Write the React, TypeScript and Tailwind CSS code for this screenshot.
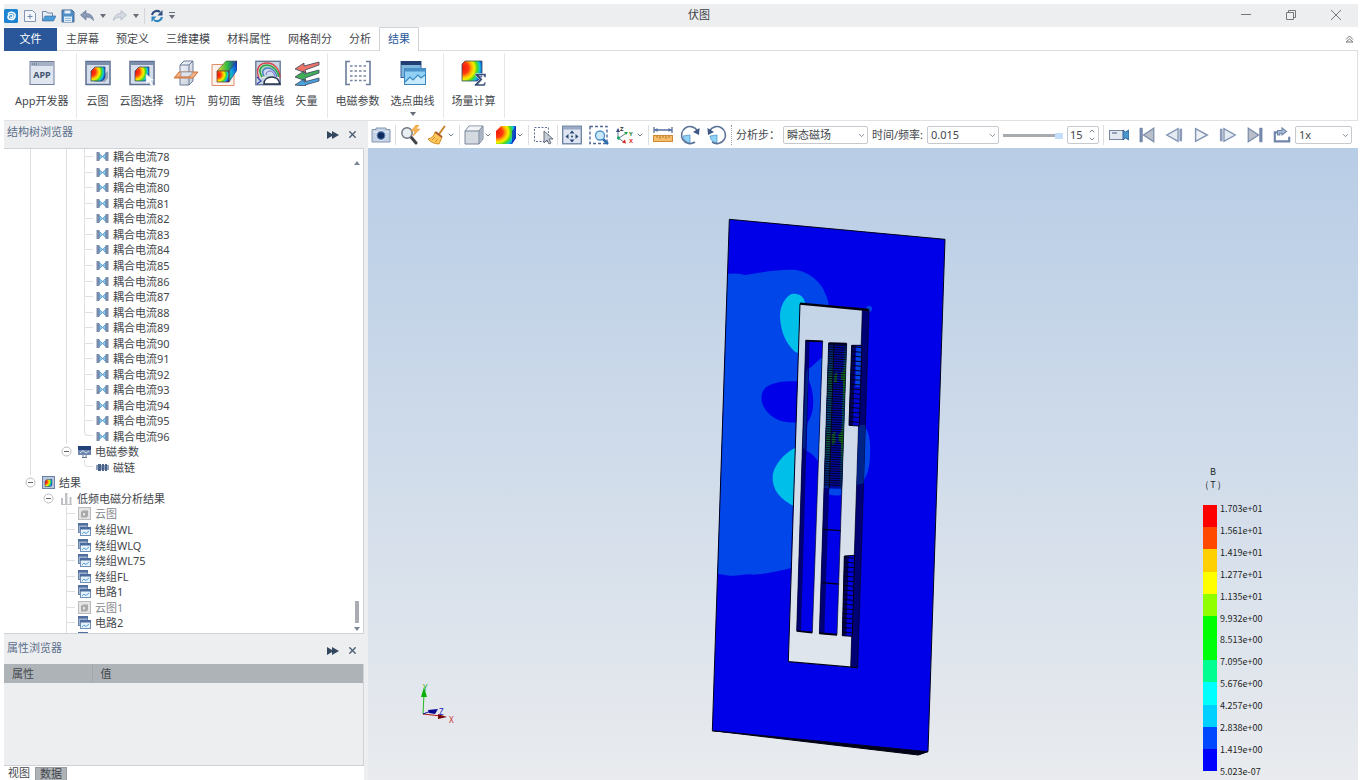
import { ChevronDown, ChevronUp, X } from "lucide-react";
import { type ReactNode, useState } from "react";

/* ------------------------------------------------------------------ */
/* Icons                                                               */
/* ------------------------------------------------------------------ */

type IconProps = { className?: string };

/** Gradients shared by all contour icons, mounted once at the page root. */
function SharedDefs() {
  return (
    <svg aria-hidden width="0" height="0" className="absolute">
      <defs>
        <radialGradient id="contour" cx="0.05" cy="0.35" r="1.1">
          <stop offset="0" stopColor="#f01808" />
          <stop offset="0.26" stopColor="#ff3a10" />
          <stop offset="0.4" stopColor="#ffb000" />
          <stop offset="0.52" stopColor="#f4f000" />
          <stop offset="0.64" stopColor="#4ed818" />
          <stop offset="0.76" stopColor="#10c8d8" />
          <stop offset="0.9" stopColor="#1038e0" />
          <stop offset="1" stopColor="#0818b0" />
        </radialGradient>
        <linearGradient id="contourSide" x1="0" y1="1" x2="1" y2="0">
          <stop offset="0" stopColor="#20c850" />
          <stop offset="0.4" stopColor="#10a8e0" />
          <stop offset="1" stopColor="#0c20c0" />
        </linearGradient>
        <linearGradient id="contourTop" x1="0" y1="0" x2="1" y2="0">
          <stop offset="0" stopColor="#ffd030" />
          <stop offset="0.5" stopColor="#30c040" />
          <stop offset="1" stopColor="#1030c8" />
        </linearGradient>
        <linearGradient id="paleFace" x1="0" y1="0" x2="1" y2="1">
          <stop offset="0" stopColor="#f4f6fa" />
          <stop offset="1" stopColor="#c3cbd8" />
        </linearGradient>
      </defs>
    </svg>
  );
}

function RibbonSvg({ children }: { children: ReactNode }) {
  return (
    <svg aria-hidden viewBox="0 0 26 26" className="size-[26px]" fill="none">
      {children}
    </svg>
  );
}

const AppIcon = () => (
  <RibbonSvg>
    <rect x="1" y="1.5" width="24" height="23" fill="#dfe6f0" stroke="#6f7f9c" />
    <rect x="1.5" y="2" width="23" height="4" fill="#a5b0c4" />
    <path d="M3 4h1M5 4h1M7 4h1" stroke="#4b5c7c" />
    <text x="13" y="18" textAnchor="middle" fontSize="9" fontWeight="700" fill="#44546f">
      APP
    </text>
  </RibbonSvg>
);

const ContourIcon = () => (
  <RibbonSvg>
    <rect x="1" y="1.5" width="24" height="23" fill="#d5deea" stroke="#5b6e90" strokeWidth="1.5" />
    <rect x="1.5" y="2" width="23" height="3" fill="#7e8fae" />
    <path d="M9 22h11l3-4V11l-3 2z" fill="#9ba7b8" />
    <path d="M6 11l4-4h10v9c0 3-2 5-5 5H6z" fill="url(#contour)" stroke="#28406a" strokeWidth="0.7" />
  </RibbonSvg>
);

const ContourPickIcon = () => (
  <RibbonSvg>
    <rect x="1" y="1.5" width="24" height="23" fill="#d5deea" stroke="#5b6e90" strokeWidth="1.5" />
    <rect x="1.5" y="2" width="23" height="3" fill="#7e8fae" />
    <path d="M6 11l4-4h10v9c0 3-2 5-5 5H6z" fill="url(#contour)" stroke="#28406a" strokeWidth="0.7" />
    <path d="M17 14l8 6-3 1 3 5-3 0-2-4-3 2z" fill="#fff" stroke="#b9c2d0" strokeWidth="0.5" />
  </RibbonSvg>
);

const SliceIcon = () => (
  <RibbonSvg>
    <path d="M7 5l4-4h9v20l-4 4H7z" fill="url(#paleFace)" stroke="#6d7d99" />
    <path d="M7 5h9v20M16 5l4-4" stroke="#6d7d99" />
    <path d="M6 12h19l-5 6H1z" fill="#f3b083" stroke="#c9733c" />
    <path d="M8 12h11v2l-4 3H8z" fill="#dfe4ec" stroke="#8a93a8" strokeWidth="0.7" />
    <path d="M3 17h15" stroke="#e07c38" />
  </RibbonSvg>
);

const CutPlaneIcon = () => (
  <RibbonSvg>
    <path d="M1 4.5h22v21H1z" fill="#fdf1ec" stroke="#e28d6c" />
    <path d="M6 11l9-10h11l-8 10z" fill="url(#contourTop)" stroke="#5b5b4c" strokeWidth="0.6" />
    <path d="M18 11l8-10v9l-8 12z" fill="url(#contourSide)" stroke="#1b2f70" strokeWidth="0.6" />
    <path d="M6 11h12v11H6z" fill="url(#contour)" stroke="#7d3d28" strokeWidth="0.8" />
  </RibbonSvg>
);

const IsolineIcon = () => (
  <RibbonSvg>
    <rect x="0.8" y="1.3" width="24.4" height="23.4" fill="#c9d3e1" stroke="#6a7b98" strokeWidth="1.4" />
    <path d="M4 18C0 8 5 3 12 3s13 6 13 15" stroke="#d8454b" strokeWidth="1.4" fill="#e9e2e8" />
    <path d="M7 17C2 9 7 5 12 5s11 5 12 12" stroke="#2ea44a" strokeWidth="1.6" fill="#a8d9b4" />
    <path d="M9 16C6 11 9 8 13 8s8 4 9 9" stroke="#4c79c8" strokeWidth="1.4" fill="#cddcf2" />
    <path d="M11 15c0-3 2-4 4-4s4 2 5 5" stroke="#7a68c0" />
    <path d="M9 24c0-5 4-7 8-7s7 3 8 7z" fill="#fff" stroke="#26334d" strokeWidth="1.4" />
    <path d="M2 17l4 4-4 3" stroke="#3346b0" strokeWidth="1.2" />
  </RibbonSvg>
);

const VectorIcon = () => (
  <RibbonSvg>
    <g stroke="#36435c" strokeWidth="0.8">
      <path d="M1 9l9-6v3l15-4v3l-14 5 1 3z" fill="#ee7468" />
      <path d="M1 17l9-6v3l15-4v3l-14 5 1 3z" fill="#3fae57" />
      <path d="M1 25l9-6v3l15-4v3l-14 4 1 1z" fill="#4aa3dd" />
    </g>
  </RibbonSvg>
);

const EmParamIcon = () => (
  <RibbonSvg>
    <path d="M5 1.5H1v23h4M21 1.5h4v23h-4" stroke="#6b7c99" strokeWidth="1.6" />
    <path d="M5 6h16M5 11h16M5 16h16M5 20.5h16" stroke="#76859f" strokeWidth="1.4" strokeDasharray="2.6 1.9" />
  </RibbonSvg>
);

const CurveIcon = () => (
  <RibbonSvg>
    <rect x="1" y="1.5" width="20" height="16" fill="#7fb6dc" stroke="#35619a" />
    <rect x="1" y="1" width="20" height="4" fill="#213d72" />
    <rect x="4.5" y="8.5" width="21" height="16" fill="#8fd0f4" stroke="#3c86bf" />
    <rect x="4.5" y="8" width="21" height="3.5" fill="#4a90c8" />
    <path d="M5 22l5-5 3 3 5-5 3 3 4-3v9H5z" fill="#c7eafc" />
    <path d="M5 22l5-5 3 3 5-5 3 3 4-3" stroke="#3a8ac6" strokeWidth="1.2" />
  </RibbonSvg>
);

const FieldCalcIcon = () => (
  <RibbonSvg>
    <path d="M1 4l3-3h17v15l-4 5H1z" fill="url(#contour)" stroke="#3c4b60" strokeWidth="0.8" />
    <path d="M14 13.500h11v4h-1.500l-1-2h-4l3 4-4 4.500h5l1-2H25l-1 4H13.500v-1.500l5-5-4.500-4.500z" fill="#3b5078" stroke="#fff" strokeWidth="0.500" />
  </RibbonSvg>
);

function ToolSvg({ children, className = "size-5" }: IconProps & { children: ReactNode }) {
  return (
    <svg aria-hidden viewBox="0 0 20 20" className={className} fill="none">
      {children}
    </svg>
  );
}

const CameraIcon = () => (
  <ToolSvg>
    <path d="M1 4.500h4V3h10v1.500h4V17H1z" fill="#c5d2e3" stroke="#8496b3" />
    <path d="M2 7h16" stroke="#e6ecf4" />
    <circle cx="10" cy="10.500" r="5" fill="#5c7fb4" stroke="#e6edf6" />
    <circle cx="10" cy="10.500" r="3.200" fill="#0f2a5c" />
  </ToolSvg>
);

const FlashZoomIcon = () => (
  <ToolSvg>
    <path d="M11 12l5 6" stroke="#40434a" strokeWidth="3" strokeLinecap="round" />
    <circle cx="7" cy="8" r="5.200" fill="#e9eef2" stroke="#6c737c" strokeWidth="1.400" />
    <path d="M16 0l-5 6h4l-2 5 7-7h-4l3-4z" fill="#f7b552" stroke="#e08c28" strokeWidth="0.500" />
  </ToolSvg>
);

const BroomIcon = () => (
  <ToolSvg>
    <path d="M17.500 1.500l-5 7" stroke="#c8862f" strokeWidth="2" strokeLinecap="round" />
    <path d="M8 7l7 5-3 7c-4 0-9-2-11-5 4-1 6-3 7-7z" fill="#fbc65a" stroke="#d38e2a" />
    <path d="M8.500 7l6.500 5" stroke="#a9562a" strokeWidth="1.800" />
    <path d="M5 15l3-3M8.500 17l2-3" stroke="#d38e2a" />
  </ToolSvg>
);

const CubeIcon = () => (
  <ToolSvg>
    <path d="M1 6l4-5h14v13l-4 5H1z" fill="#d5dae1" stroke="#78869b" />
    <path d="M15.500 6.500L18.500 2.500v11l-3 4z" fill="#a9b3c2" />
    <path d="M2 5.500l3.500-4h12l-3 4z" fill="#f2f4f7" />
    <path d="M1 6h14v13M15 6l4-5" stroke="#78869b" />
  </ToolSvg>
);

const ContourCubeIcon = () => (
  <ToolSvg>
    <path d="M0 6l5-5h15v12l-4 6H0z" fill="url(#contour)" />
    <path d="M16 6l4-5v12l-4 6z" fill="#0a22b8" opacity="0.700" />
  </ToolSvg>
);

const PickBoxIcon = () => (
  <ToolSvg>
    <rect x="1.500" y="2.500" width="14" height="14" stroke="#5f7394" strokeDasharray="2 1.500" />
    <path d="M11 6v12l3-3 2 4 2-1-2-4h4z" fill="#c6cdd8" stroke="#5c6577" strokeWidth="0.900" />
  </ToolSvg>
);

const FitIcon = () => (
  <ToolSvg>
    <rect x="0.700" y="1.200" width="18.600" height="17.600" fill="#dde5f0" stroke="#6a7ea0" strokeWidth="1.300" />
    <rect x="1" y="1.500" width="18" height="3" fill="#9aaac4" />
    <path d="M10 5.500l2.500 3h-5zM10 17.500l2.500-3h-5zM3.500 11.500l3-2.500v5zM16.500 11.500l-3-2.500v5z" fill="#2c4674" />
    <circle cx="10" cy="11.500" r="1" fill="#2c4674" />
  </ToolSvg>
);

const ZoomAreaIcon = () => (
  <ToolSvg>
    <rect x="1" y="1.500" width="17" height="17" stroke="#4f6a94" strokeWidth="1.400" strokeDasharray="3 2" />
    <path d="M14 14l5 5" stroke="#2b6cb0" strokeWidth="2.500" />
    <circle cx="11" cy="10.500" r="4.500" fill="#c9e9fa" stroke="#4b8fc8" strokeWidth="1.300" />
  </ToolSvg>
);

const AxesIcon = () => (
  <ToolSvg>
    <path d="M2 4v9l6 4M3 13l6-4" stroke="#6b7c88" />
    <path d="M2 3l2 4H0z" fill="#3a4f80" />
    <path d="M12 7H8l2 3z" fill="#28a048" />
    <path d="M10 18.500l-4-1 3-3z" fill="#d22" />
    <circle cx="2.500" cy="13" r="1.700" fill="#20a870" />
    <text x="4" y="6" fontSize="6" fontWeight="700" fill="#333">
      Z
    </text>
    <text x="13" y="11" fontSize="6" fontWeight="700" fill="#2d8a3c">
      Y
    </text>
    <text x="13" y="18" fontSize="6" fontWeight="700" fill="#d33">
      X
    </text>
  </ToolSvg>
);

const RulerIcon = () => (
  <ToolSvg>
    <path d="M1 5h18M1 2v6M19 2v6" stroke="#54709e" strokeWidth="1.300" />
    <path d="M1.500 5l3-2v4zM18.500 5l-3-2v4z" fill="#54709e" />
    <rect x="0.500" y="10.500" width="19" height="6" fill="#f6bd6a" stroke="#cf8a36" />
    <path d="M4 11v2M7 11v3M10 11v2M13 11v3M16 11v2" stroke="#a8671c" strokeWidth="0.800" />
  </ToolSvg>
);

const RotateLeftIcon = () => (
  <ToolSvg>
    <path d="M10 10v8a8 8 0 0 1-7-7z" fill="#8fd2f6" stroke="#3f8dc6" strokeWidth="0.700" />
    <path d="M15 17a8.500 8.500 0 1 1 2.500-11" stroke="#5d7499" strokeWidth="1.600" />
    <path d="M19.500 3l-.5 7-6-3z" fill="#3d5884" />
  </ToolSvg>
);

const RotateRightIcon = () => (
  <ToolSvg>
    <path d="M10 10v8a8 8 0 0 1-7-7z" fill="#8fd2f6" stroke="#3f8dc6" strokeWidth="0.700" />
    <path d="M5 17a8.500 8.500 0 1 0-2.500-11" stroke="#5d7499" strokeWidth="1.600" />
    <path d="M.5 3l.5 7 6-3z" fill="#3d5884" />
  </ToolSvg>
);

const RecordIcon = () => (
  <ToolSvg>
    <rect x="0.500" y="5.500" width="14" height="9" fill="#e3e8ef" stroke="#75859f" />
    <path d="M3 8h5" stroke="#75859f" strokeWidth="1.400" />
    <path d="M14 5l2.500 2L20 5v10l-3.500-2-2.500 2z" fill="#4d97cf" stroke="#35608f" />
  </ToolSvg>
);

const FirstFrameIcon = () => (
  <ToolSvg className="size-[18px]">
    <path d="M3.500 2v16" stroke="#7388aa" strokeWidth="3.500" />
    <path d="M17.500 2.500v15L6 10z" fill="#b9bec8" stroke="#7c8fae" strokeWidth="1.400" />
  </ToolSvg>
);

const PrevFrameIcon = () => (
  <ToolSvg className="size-[18px]">
    <path d="M17.500 3v14" stroke="#8a9cba" strokeWidth="3" />
    <path d="M14.500 3v14L2 10z" fill="#e4eaf2" stroke="#8194b3" strokeWidth="1.500" />
  </ToolSvg>
);

const PlayIcon = () => (
  <ToolSvg className="size-[18px]">
    <path d="M4 3v14l13-7z" fill="#eef2f7" stroke="#8194b3" strokeWidth="1.600" />
  </ToolSvg>
);

const NextFrameIcon = () => (
  <ToolSvg className="size-[18px]">
    <path d="M2.500 3v14" stroke="#8a9cba" strokeWidth="3" />
    <path d="M5.500 3v14L18 10z" fill="#e4eaf2" stroke="#8194b3" strokeWidth="1.500" />
  </ToolSvg>
);

const LastFrameIcon = () => (
  <ToolSvg className="size-[18px]">
    <path d="M16.500 2v16" stroke="#7388aa" strokeWidth="3.500" />
    <path d="M2.500 2.500v15L14 10z" fill="#b9bec8" stroke="#7c8fae" strokeWidth="1.400" />
  </ToolSvg>
);

const LoopIcon = () => (
  <ToolSvg className="size-[18px]">
    <path d="M5 7H2v10h16v-5" stroke="#6f86aa" strokeWidth="2.400" />
    <path d="M5 10V5h5V2l5 4-5 4V8H7.500v2z" fill="#a9bbd6" stroke="#6f86aa" strokeWidth="1.200" />
  </ToolSvg>
);

/* ------------------------------------------------------------------ */
/* Title bar                                                           */
/* ------------------------------------------------------------------ */

const Caret = () => (
  <svg aria-hidden viewBox="0 0 6 4" className="h-1 w-1.5" fill="#666d78">
    <path d="M0 0h6L3 4z" />
  </svg>
);

function QuickSvg({ children }: { children: ReactNode }) {
  return (
    <svg aria-hidden viewBox="0 0 14 14" className="size-3.5" fill="none">
      {children}
    </svg>
  );
}

function TitleBar() {
  return (
    <header className="grid h-[23px] shrink-0 grid-cols-[1fr_auto_1fr] items-center bg-[#edeef0]">
      <div className="flex items-center gap-[5px]">
        <QuickSvg>
          <rect x="0" y="0" width="14" height="14" rx="1.500" fill="#1c84d0" />
          <path d="M4 5C6 2 12 3 11 7.500 10 12 4 11 4 8s5-3.500 5-1-3 1.500-2.500.5" stroke="#fff" strokeWidth="1.500" />
        </QuickSvg>
        <button type="button" aria-label="新建">
          <QuickSvg>
            <path d="M1.500 1.500h8l3 3v8h-11z" fill="#f3f6fa" stroke="#8395b2" />
            <path d="M7 5v5M4.500 7.500h5" stroke="#6f86ab" />
          </QuickSvg>
        </button>
        <button type="button" aria-label="打开">
          <QuickSvg>
            <path d="M.5 12V2.500h4l1 1.500h5v3" fill="#e8eef5" stroke="#6d87ac" />
            <path d="M.5 12L3 7h11l-2.500 5z" fill="#4a9cd8" stroke="#39699c" strokeWidth="0.600" />
          </QuickSvg>
        </button>
        <button type="button" aria-label="保存">
          <QuickSvg>
            <path d="M1 1h10l2 2v10H1z" fill="#4f8fc6" stroke="#4a6894" />
            <path d="M3.500 1.500h6v3h-6z" fill="#e8eff6" />
            <path d="M3 7.500h8V13H3z" fill="#dcebf6" />
            <path d="M4 9.500h6M4 11.500h6" stroke="#7aa7cc" strokeWidth="0.700" />
          </QuickSvg>
        </button>
        <button type="button" aria-label="撤销" className="flex items-center gap-1.5">
          <QuickSvg>
            <path d="M.5 6L6 1.500v3c5 0 7 3 7.500 7C12 9 9 8 6 8v3z" fill="#8a9ab6" stroke="#66789a" strokeWidth="0.700" />
          </QuickSvg>
          <Caret />
        </button>
        <button type="button" aria-label="重做" className="ml-0.5 flex items-center gap-1.5">
          <QuickSvg>
            <path d="M13.500 6L8 1.500v3c-5 0-7 3-7.500 7C2 9 5 8 8 8v3z" fill="#d5dae2" stroke="#aab2c0" strokeWidth="0.700" />
          </QuickSvg>
          <Caret />
        </button>
        <span className="h-4 w-px bg-[#d4d6d9]" />
        <button type="button" aria-label="刷新">
          <QuickSvg>
            <path d="M2 6a5 5 0 0 1 8-3" stroke="#2c4e80" strokeWidth="2.200" />
            <path d="M12.500 1v5.500H7.500z" fill="#2c4e80" />
            <path d="M12 8a5 5 0 0 1-8 3" stroke="#2f86bf" strokeWidth="2.200" />
            <path d="M1.500 13V7.500h5z" fill="#2f86bf" />
          </QuickSvg>
        </button>
        <svg aria-hidden viewBox="0 0 6 7" className="h-[7px] w-1.5" fill="#666d78">
          <path d="M0 0h6v1H0zM0 3h6L3 7z" />
        </svg>
      </div>
      <h1 className="pl-9 text-[#3a3d42]">伏图</h1>
      <div className="flex items-center justify-end gap-[33px] pr-4 text-[#777]">
        <button type="button" aria-label="最小化">
          <svg aria-hidden viewBox="0 0 12 12" className="size-3" stroke="currentColor">
            <path d="M1 4.500h10" />
          </svg>
        </button>
        <button type="button" aria-label="还原">
          <svg aria-hidden viewBox="0 0 12 12" className="size-3" stroke="currentColor" fill="none">
            <path d="M1.500 2.500h7v7h-7zM3.500 2.500v-2h7v7h-2" />
          </svg>
        </button>
        <button type="button" aria-label="关闭">
          <svg aria-hidden viewBox="0 0 12 12" className="size-3" stroke="currentColor">
            <path d="M1 0l10 10M11 0L1 10" />
          </svg>
        </button>
      </div>
    </header>
  );
}

/* ------------------------------------------------------------------ */
/* Ribbon                                                              */
/* ------------------------------------------------------------------ */

const MENU_TABS = ["主屏幕", "预定义", "三维建模", "材料属性", "网格剖分", "分析", "结果"];

function MenuTabs() {
  const [active, setActive] = useState("结果");
  return (
    <nav className="flex h-6 shrink-0 border-b border-[#dcdddf] pt-px">
      <button type="button" className="h-[23px] w-[53px] bg-[#2a579a] text-white">
        文件
      </button>
      <div className="flex gap-px pl-px">
        {MENU_TABS.map((tab) => (
          <button
            key={tab}
            type="button"
            aria-pressed={tab === active}
            onClick={() => setActive(tab)}
            className={
              tab === active
                ? "-mt-px -ml-px h-6 border-x border-t border-[#d0d2d5] bg-white px-2 text-[#2a579a]"
                : "px-2"
            }
          >
            {tab}
          </button>
        ))}
      </div>
      <button type="button" aria-label="折叠功能区" className="mr-1 ml-auto text-[#777]">
        <svg aria-hidden viewBox="0 0 9 8" className="h-2 w-[9px]" fill="none" stroke="currentColor">
          <path d="M1 4.500L4.500 1 8 4.500M1 7l3.500-3L8 7z" />
        </svg>
      </button>
    </nav>
  );
}

type RibbonItem = { label: string; icon: ReactNode; menu?: boolean };

const RIBBON_GROUPS: { className: string; items: RibbonItem[] }[] = [
  { className: "pl-[11px] pr-[7px]", items: [{ label: "App开发器", icon: <AppIcon /> }] },
  {
    className: "pl-[10px] pr-[9px]",
    items: [
      { label: "云图", icon: <ContourIcon /> },
      { label: "云图选择", icon: <ContourPickIcon /> },
      { label: "切片", icon: <SliceIcon /> },
      { label: "剪切面", icon: <CutPlaneIcon /> },
      { label: "等值线", icon: <IsolineIcon /> },
      { label: "矢量", icon: <VectorIcon /> },
    ],
  },
  {
    className: "px-2",
    items: [
      { label: "电磁参数", icon: <EmParamIcon /> },
      { label: "选点曲线", icon: <CurveIcon />, menu: true },
    ],
  },
  { className: "px-2", items: [{ label: "场量计算", icon: <FieldCalcIcon /> }] },
];

function Ribbon() {
  return (
    <div className="flex h-[70px] shrink-0 border-r border-b border-[#e0e1e3] pt-0.5 pb-0.5">
      {RIBBON_GROUPS.map((group) => (
        <div
          key={group.items[0]!.label}
          className={"flex gap-[11px] border-r border-[#e6e7e9] " + group.className}
        >
          {group.items.map((item) => (
            <button
              key={item.label}
              type="button"
              className="flex flex-col items-center pt-[7px]"
            >
              {/* icons may be wider than a two-character label */}
              <span className="-mx-1 flex h-[30px] justify-center">{item.icon}</span>
              <span className="leading-[22px] whitespace-nowrap">{item.label}</span>
              {item.menu && <Caret />}
            </button>
          ))}
        </div>
      ))}
    </div>
  );
}

/* ------------------------------------------------------------------ */
/* Side panels                                                         */
/* ------------------------------------------------------------------ */

function PanelHeader({ title }: { title: string }) {
  return (
    <div className="flex h-[27px] shrink-0 items-center pr-2.5 pl-[3px] text-[#5c6f8c]">
      <h2 className="pb-1">{title}</h2>
      <button type="button" aria-label={title + " 停靠"} className="mr-2 ml-auto">
        <svg aria-hidden viewBox="0 0 12 8" className="h-2 w-3" fill="#33475f">
          <path d="M0 0l5 3V0l7 4-7 4V5L0 8z" />
        </svg>
      </button>
      <button type="button" aria-label={title + " 关闭"}>
        <X className="size-[11px] text-[#4a5c73]" strokeWidth={3} />
      </button>
    </div>
  );
}

type TreeIconKind = "coil" | "monitor" | "chain" | "result" | "bars" | "contour" | "curve";

function TreeIcon({ kind }: { kind: TreeIconKind }) {
  return (
    <svg aria-hidden viewBox="0 0 13 13" className="size-[13px] shrink-0" fill="none">
      {kind === "coil" && (
        <>
          <path d="M.5 2h3v9h-3z" fill="#7c8ca8" />
          <path d="M9.500 2h3v9h-3z" fill="#7c8ca8" />
          <path d="M3.500 3.500l3 3-3 3zM9.500 3.500l-3 3 3 3z" fill="#8cc6ec" stroke="#4a8cc0" strokeWidth="0.700" />
        </>
      )}
      {kind === "monitor" && (
        <>
          <path d="M0 1h13v9H0z" fill="#6f86ae" />
          <path d="M0 1h13v4H0z" fill="#24427a" />
          <path d="M2 8l3-2.500L8 8l3-2" stroke="#dbe5f2" />
          <path d="M4 12.500h5M5 10v2M8 10v2" stroke="#66789a" />
        </>
      )}
      {kind === "chain" && (
        <>
          <path d="M0 4h13v5H0z" fill="#8fa0ba" />
          <path d="M2 3h3v7H2zM6 3h2v7H6zM9 3h2v7H9z" fill="#4b628a" />
        </>
      )}
      {kind === "result" && (
        <>
          <rect x="0.500" y="0.500" width="12" height="12" fill="#b9c8dd" stroke="#6c81a6" />
          <path d="M3 5l2-1.500h5V9l-1.500 1.500H3z" fill="url(#contour)" stroke="#28406a" strokeWidth="0.500" />
        </>
      )}
      {kind === "bars" && <path d="M1 6h2v6H1zM5 1h2.500v11H5zM9.500 5h2v7h-2zM1 12h11v1H1z" fill="#bfc3c8" />}
      {kind === "contour" && (
        <>
          <rect x="0.500" y="0.500" width="12" height="12" fill="#e4e4e4" stroke="#bcbcbc" />
          <path d="M3 5l2-1.500h5V9l-1.500 1.500H3z" fill="#a9a9a9" />
          <path d="M5 6h2v2.500H5z" fill="#e6e6e6" />
        </>
      )}
      {kind === "curve" && (
        <>
          <rect x="0.500" y="0.500" width="9" height="9" fill="#9db3d2" stroke="#6d84aa" />
          <path d="M0 0h10v2.500H0z" fill="#526e9e" />
          <rect x="2.500" y="4.500" width="10" height="8" fill="#e6f1fa" stroke="#6d8fb8" />
          <path d="M2 4h11v2.500H2z" fill="#4d6c9e" />
          <path d="M4 11l2-2 2 1.500L11 8" stroke="#58a0d8" />
        </>
      )}
    </svg>
  );
}

/**
 * `guides` holds one character per indent column:
 *   "|" a passing line, "+" a tee, "L" the last child, "-" an expander.
 */
type TreeRow = { guides: string; icon: TreeIconKind; label?: string; muted?: boolean };

const COUPLED_CURRENTS: TreeRow[] = Array.from({ length: 19 }, (_, i) => ({
  guides: i === 18 ? "| |L" : "| |+",
  icon: "coil",
  label: "耦合电流" + (78 + i),
}));

const TREE_ROWS: TreeRow[] = [
  ...COUPLED_CURRENTS,
  { guides: "| -", icon: "monitor", label: "电磁参数" },
  { guides: "|  L", icon: "chain", label: "磁链" },
  { guides: "-", icon: "result", label: "结果" },
  { guides: " -", icon: "bars", label: "低频电磁分析结果" },
  { guides: "  +", icon: "contour", label: "云图", muted: true },
  { guides: "  +", icon: "curve", label: "绕组WL" },
  { guides: "  +", icon: "curve", label: "绕组WLQ" },
  { guides: "  +", icon: "curve", label: "绕组WL75" },
  { guides: "  +", icon: "curve", label: "绕组FL" },
  { guides: "  +", icon: "curve", label: "电路1" },
  { guides: "  +", icon: "contour", label: "云图1", muted: true },
  { guides: "  +", icon: "curve", label: "电路2" },
  { guides: "  +", icon: "curve" },
];

function Guide({ kind }: { kind: string }) {
  if (kind === "-") {
    return (
      <button type="button" aria-label="折叠" className="flex w-[18px] items-center justify-center">
        <svg aria-hidden viewBox="0 0 11 11" className="size-[11px]" fill="#fff" stroke="#b9bcc0">
          <circle cx="5.500" cy="5.500" r="4.500" />
          <path d="M3 5.500h5" stroke="#666" />
        </svg>
      </button>
    );
  }
  return (
    <span className="flex w-[18px] pl-[9px]">
      {kind === "|" && <span className="border-l border-[#dddfe1]" />}
      {kind === "+" && (
        <span className="flex items-center border-l border-[#dddfe1]">
          <span className="h-px w-2 bg-[#dddfe1]" />
        </span>
      )}
      {kind === "L" && <span className="h-1/2 w-[9px] rounded-bl-sm border-b border-l border-[#dddfe1]" />}
    </span>
  );
}

function StructureTree() {
  return (
    <section className="flex min-h-0 flex-1 flex-col">
      <PanelHeader title="结构树浏览器" />
      <div className="mr-1 flex min-h-0 flex-1 overflow-hidden border-t border-r border-b border-[#cfd2d6] bg-white">
        <ul className="flex h-[497px] flex-1 flex-col pl-[17px]">
          {TREE_ROWS.map((row, i) => (
            <li key={i} className="flex min-h-0 flex-1 leading-[15px]">
              {[...row.guides].map((kind, col) => (
                <Guide key={col} kind={kind} />
              ))}
              <span
                className={
                  "flex items-center gap-1 pl-[3px] " + (row.muted ? "text-[#85888c]" : "")
                }
              >
                <TreeIcon kind={row.icon} />
                {row.label}
              </span>
            </li>
          ))}
        </ul>
        <div className="flex w-3 flex-col items-center pt-3 pb-0.5">
          <svg aria-hidden viewBox="0 0 6 4" className="h-1 w-1.5" fill="#7b8794">
            <path d="M0 4h6L3 0z" />
          </svg>
          <span className="mt-auto mb-1 h-[22px] w-1 bg-[#a9adb1]" />
          <svg aria-hidden viewBox="0 0 6 4" className="h-1 w-1.5" fill="#7b8794">
            <path d="M0 0h6L3 4z" />
          </svg>
        </div>
      </div>
    </section>
  );
}

function PropertyPanel() {
  return (
    <section className="flex h-[146px] shrink-0 flex-col overflow-hidden pt-[3px]">
      <PanelHeader title="属性浏览器" />
      <div className="mr-1 h-[102px] shrink-0 border-r border-b border-[#cfd2d6]">
        <table className="w-full table-fixed border-collapse text-left">
          <thead>
            <tr className="h-[19px] bg-[#aeb3b7] leading-[15px]">
              <th scope="col" className="w-[88px] border-r border-[#a3a8ac] pl-2 font-normal">
                属性
              </th>
              <th scope="col" className="pl-2 font-normal">
                值
              </th>
            </tr>
          </thead>
        </table>
      </div>
      <div className="mr-1 flex min-h-0 flex-1 items-start bg-white leading-3">
        <button type="button" className="px-1 pt-px pb-1">
          视图
        </button>
        <button type="button" className="mt-px ml-px border border-b-0 border-[#989da1] bg-[#aeb3b7] px-1">
          数据
        </button>
      </div>
    </section>
  );
}

/* ------------------------------------------------------------------ */
/* View toolbar                                                        */
/* ------------------------------------------------------------------ */

function Tool({ label, children, menu }: { label: string; children: ReactNode; menu?: boolean }) {
  return (
    <button type="button" aria-label={label} className="flex shrink-0 items-center">
      {children}
      {menu && <ChevronDown className="size-2 text-[#6e7c8c]" strokeWidth={3} />}
    </button>
  );
}

const Divider = () => <span className="h-5 w-px shrink-0 bg-[#dcdee0]" />;

function ToolSelect({
  id,
  value,
  className,
}: {
  id: string;
  value: string;
  className: string;
}) {
  return (
    <span className={"relative flex shrink-0 items-center " + className}>
      <select
        id={id}
        aria-label={id}
        defaultValue={value}
        className="h-[18px] w-full appearance-none rounded-xs border border-[#c6c9cd] bg-white pl-[3px] leading-4"
      >
        <option>{value}</option>
      </select>
      <ChevronDown className="pointer-events-none absolute right-0.5 size-[9px] text-[#7b8794]" strokeWidth={2.5} />
    </span>
  );
}

function ViewToolbar() {
  const [frame, setFrame] = useState(15);
  return (
    <div className="flex h-[26px] shrink-0 items-center gap-1 bg-white pr-1.5 pl-[3px]">
      <Tool label="截图"><CameraIcon /></Tool>
      <Divider />
      <Tool label="快速缩放"><FlashZoomIcon /></Tool>
      <div className="flex items-center gap-1 pl-[3px]">
        <Tool label="清除" menu><BroomIcon /></Tool>
        <Divider />
        <Tool label="显示模式" menu><CubeIcon /></Tool>
        <Tool label="云图显示" menu><ContourCubeIcon /></Tool>
        <Divider />
        <Tool label="框选"><PickBoxIcon /></Tool>
        <Divider />
      </div>
      <div className="flex items-center gap-[7px]">
        <Tool label="适应窗口"><FitIcon /></Tool>
        <Tool label="窗口缩放"><ZoomAreaIcon /></Tool>
        <Tool label="视角" menu><AxesIcon /></Tool>
      </div>
      <Divider />
      <div className="flex items-center gap-[7px]">
        <Tool label="测量"><RulerIcon /></Tool>
        <Tool label="左旋"><RotateLeftIcon /></Tool>
        <Tool label="右旋"><RotateRightIcon /></Tool>
      </div>
      <span className="h-5 shrink-0 border-l border-dotted border-[#999]" />
      <label htmlFor="step" className="w-[43px] shrink-0 whitespace-nowrap">
        分析步：
      </label>
      <ToolSelect id="step" value="瞬态磁场" className="w-[85px]" />
      <label htmlFor="time" className="w-[51px] shrink-0 whitespace-nowrap">
        时间/频率:
      </label>
      <ToolSelect id="time" value="0.015" className="w-[72px]" />
      <input
        type="range"
        aria-label="帧"
        min={0}
        max={15}
        value={frame}
        onChange={(e) => setFrame(Number(e.target.value))}
        className="h-3 w-[60px] shrink-0 appearance-none bg-transparent [&::-webkit-slider-runnable-track]:h-[3px] [&::-webkit-slider-runnable-track]:bg-[#a5abaf] [&::-webkit-slider-thumb]:-mt-px [&::-webkit-slider-thumb]:h-1.5 [&::-webkit-slider-thumb]:w-2 [&::-webkit-slider-thumb]:appearance-none [&::-webkit-slider-thumb]:bg-[#c5dffb]"
      />
      <span className="flex h-[18px] w-8 shrink-0 items-center rounded-xs border border-[#c6c9cd] pl-0.5">
        <input
          aria-label="帧号"
          value={frame}
          onChange={(e) => setFrame(Number(e.target.value) || 0)}
          className="w-[18px]"
        />
        <span className="flex flex-col text-[#7b8794]">
          <button type="button" aria-label="增加" onClick={() => setFrame((f) => Math.min(15, f + 1))}>
            <ChevronUp className="size-2" strokeWidth={3} />
          </button>
          <button type="button" aria-label="减少" onClick={() => setFrame((f) => Math.max(0, f - 1))}>
            <ChevronDown className="size-2" strokeWidth={3} />
          </button>
        </span>
      </span>
      <Divider />
      <div className="ml-auto flex shrink-0 items-center gap-[9px]">
        <Tool label="录制"><RecordIcon /></Tool>
        <Tool label="首帧"><FirstFrameIcon /></Tool>
        <Tool label="上一帧"><PrevFrameIcon /></Tool>
        <Tool label="播放"><PlayIcon /></Tool>
        <Tool label="下一帧"><NextFrameIcon /></Tool>
        <Tool label="末帧"><LastFrameIcon /></Tool>
        <Tool label="循环"><LoopIcon /></Tool>
      </div>
      <ToolSelect id="speed" value="1x" className="w-[57px]" />
    </div>
  );
}

/* ------------------------------------------------------------------ */
/* 3D viewport                                                         */
/* ------------------------------------------------------------------ */

/** Slanted turn lines of a winding, from `top` to `bottom`. */
function Turns({
  top,
  bottom,
  step,
  left,
  right,
  slant,
  stroke,
  width,
}: {
  top: number;
  bottom: number;
  step: number;
  left: number;
  right: number;
  slant: number;
  stroke: string;
  width: number;
}) {
  const count = Math.floor((bottom - top) / step);
  return (
    <g stroke={stroke} strokeWidth={width}>
      {Array.from({ length: count }, (_, i) => {
        const y = top + step * i;
        const dx = (slant * i) / count;
        return <path key={i} d={`M${left - dx} ${y}L${right - dx} ${y + 3}`} />;
      })}
    </g>
  );
}

function FieldModel() {
  return (
    <svg
      role="img"
      aria-label="磁感应强度云图"
      viewBox="0 0 780 1710"
      className="absolute top-[52px] left-[332px] h-[570px] w-[260px]"
      fill="none"
    >
      <defs>
        <clipPath id="plate">
          <path clipRule="evenodd" d="M88 58L735 118 684 1655 37 1592zM300 311L488 328 452 1402 265 1385z" />
        </clipPath>
        <clipPath id="barFront">
          <path d="M329 421L368 424 337 1297 303 1292z" />
        </clipPath>
        <linearGradient id="coilGlow" x1="0" y1="0" x2="0" y2="1">
          <stop offset="0" stopColor="#001c6c" />
          <stop offset="0.15" stopColor="#005a68" />
          <stop offset="0.25" stopColor="#1c8800" />
          <stop offset="0.4" stopColor="#006a5c" />
          <stop offset="0.55" stopColor="#006474" />
          <stop offset="0.66" stopColor="#1c8800" />
          <stop offset="0.8" stopColor="#005a60" />
          <stop offset="1" stopColor="#00287c" />
        </linearGradient>
      </defs>

      {/* core plate */}
      <path d="M37 1592L655 1665 684 1655z" fill="#000018" stroke="#000010" strokeWidth="3" />
      <g clipPath="url(#plate)">
        <path d="M0 0h780v1710H0z" fill="#0000e8" />
        <path
          d="M78 222Q110 218 135 225C180 218 230 208 280 209 330 212 370 255 375 280Q385 295 388 330L300 312 272 1105C240 1112 200 1123 160 1124 140 1120 110 1130 90 1127L40 1120z"
          fill="#0046e9"
        />
        <path d="M315 318C318 285 290 278 275 282 255 290 240 320 240 350 242 400 262 435 285 455L300 462V312z" fill="#00c0ea" />
        <path d="M300 545C250 540 200 548 188 575 175 610 200 640 225 655 245 668 270 669 300 667z" fill="#0000e8" />
        <path d="M300 738C270 745 225 785 218 825 215 870 240 900 290 922z" fill="#00c0ea" />
        <path d="M498 322q10-10 18 0 3 10-10 16z" fill="#0046e9" />
        <path d="M480 670C512 680 512 740 510 770 508 810 500 840 470 862z" fill="#0046e9" />
      </g>
      <path d="M88 58L735 118 684 1655 37 1592zM300 311L265 1385" stroke="#00001c" strokeWidth="3" />

      {/* slot wall */}
      <path d="M487 328L507 330 473 1403 452 1400z" fill="#000074" stroke="#00001c" strokeWidth="2" />
      <path d="M476 675L496 675 491 850 470 855z" fill="#002486" />
      <path d="M300 311L507 330" stroke="#000010" strokeWidth="7" />
      <path d="M265 1385L473 1403" stroke="#00001c" strokeWidth="4" />

      {/* first winding */}
      <path d="M317 422L368 424 337 1297 290 1292z" fill="#0000e8" />
      <g clipPath="url(#barFront)">
        <path d="M370 468L326 508V540C345 580 345 640 322 668L316 750Q345 765 358 790z" fill="#0046e9" />
      </g>
      <path d="M317 422L329 421 303 1293 290 1292z" fill="#000074" />
      <path d="M325 500L316 750 308 740 318 520z" fill="#002486" />
      <path d="M317 422L368 424 337 1297 290 1292z" stroke="#00001c" strokeWidth="2" />
      <path d="M317 422L368 424M290 1293L337 1298" stroke="#000014" strokeWidth="5" />

      {/* second winding */}
      <path d="M386 430L440 431 411 1304 358 1300z" fill="#0000e8" />
      <path d="M384 865L426 865 425 884Q405 890 384 882z" fill="#0046e9" />
      <path d="M386 430L402 430 373 1301 358 1300z" fill="#000074" />
      <path d="M386 430L440 431 426 866 372 864z" fill="#0008a4" />
      <path d="M386 430L402 430 388 865 372 864z" fill="url(#coilGlow)" opacity="0.7" />
      <path d="M433 430L440 431 426 866 419 866z" fill="url(#coilGlow)" />
      <path d="M402 525L412 515 411 550 402 545zM394 705L406 692 407 728 396 735z" fill="#1c9000" opacity="0.7" />
      <path d="M422 520L436 505 435 545 423 540zM414 705L428 690 428 730 416 725z" fill="#1c9000" opacity="0.7" />
      <Turns top={434} bottom={866} step={7} left={386} right={438} slant={14} stroke="#00041c" width={3} />
      <path d="M402 430L388 866" stroke="#00041c" strokeWidth="3" />
      <path d="M369 988L422 992M366 1148L416 1152" stroke="#00001c" strokeWidth="4" />
      <path d="M386 430L440 431 411 1304 358 1300z" stroke="#00001c" strokeWidth="2" />
      <path d="M386 430L440 431M358 1300L411 1304" stroke="#000014" strokeWidth="6" />

      {/* upper and lower stacks on the right */}
      <path d="M455 436L486 436 478 678 447 676z" fill="#0008d8" />
      <path d="M469 440L484 440 480 560 466 560z" fill="#0046e9" />
      <path d="M455 436L467 436 459 677 447 676z" fill="#000058" />
      <Turns top={440} bottom={680} step={14} left={455} right={485} slant={8} stroke="#00001c" width={3} />
      <path d="M455 436L486 436 478 678 447 676z" stroke="#00001c" strokeWidth="3" />
      <path d="M433 1068L464 1066 457 1309 427 1307z" fill="#0000e0" />
      <path d="M433 1068L446 1068 439 1308 427 1307z" fill="#000058" />
      <Turns top={1072} bottom={1312} step={14} left={433} right={464} slant={7} stroke="#00001c" width={3} />
      <path d="M433 1068L464 1066 457 1309 427 1307z" stroke="#00001c" strokeWidth="3" />
    </svg>
  );
}

function AxisTriad() {
  return (
    <svg aria-hidden viewBox="0 0 44 48" className="absolute bottom-[52px] left-[46px] h-12 w-11" fill="none">
      <path d="M9 34L10 14" stroke="#22b822" />
      <path d="M7 17L10 7l3 10z" fill="#08b008" />
      <path d="M9 34l18 2" stroke="#b01818" />
      <path d="M24 34l9 3-9 2z" fill="#780808" />
      <path d="M9 34l8-3" stroke="#1010a0" />
      <path d="M14 30l10-1-3 5-6-1z" fill="#080890" />
      <text x="9" y="11" fontSize="8" fill="#2cb02c">
        Y
      </text>
      <text x="25" y="35" fontSize="8" fill="#2222c8">
        Z
      </text>
      <text x="35" y="43" fontSize="8" fill="#c83030">
        X
      </text>
    </svg>
  );
}

const LEGEND_COLORS = [
  "bg-[#ff0000]",
  "bg-[#ff4800]",
  "bg-[#ffd000]",
  "bg-[#ffff00]",
  "bg-[#90ff00]",
  "bg-[#00ff00]",
  "bg-[#00ff0a]",
  "bg-[#00ff90]",
  "bg-[#00ffff]",
  "bg-[#00d0ff]",
  "bg-[#0048ff]",
  "bg-[#0000ff]",
];

const LEGEND_LABELS = [
  "1.703e+01",
  "1.561e+01",
  "1.419e+01",
  "1.277e+01",
  "1.135e+01",
  "9.932e+00",
  "8.513e+00",
  "7.095e+00",
  "5.676e+00",
  "4.257e+00",
  "2.838e+00",
  "1.419e+00",
  "5.023e-07",
];

function Legend() {
  return (
    <div className="absolute right-[93px] -bottom-0.5 w-[62px] font-['Noto_Sans_CJK_SC','Noto_Sans',sans-serif] text-[9px] text-[#1c1f24]">
      <p className="w-5 text-center leading-[13px]">B</p>
      <p className="w-5 text-center leading-[13px] whitespace-nowrap">( T )</p>
      <div className="mt-[7px] flex gap-[3px]">
        <div className="mt-[7px] flex h-[266px] w-[14px] flex-col">
          {LEGEND_COLORS.map((color) => (
            <span key={color} className={"flex-1 " + color} />
          ))}
        </div>
        <ol className="flex h-[284px] flex-col">
          {LEGEND_LABELS.map((label) => (
            <li key={label} className="flex flex-1 items-center leading-none">
              {label}
            </li>
          ))}
        </ol>
      </div>
    </div>
  );
}

function Viewport() {
  return (
    <div className="relative min-h-0 flex-1 overflow-hidden bg-linear-to-b from-[#b8cde6] to-[#e9ebee]">
      <FieldModel />
      <AxisTriad />
      <Legend />
    </div>
  );
}

export default function App() {
  return (
    <div className="flex h-screen flex-col overflow-hidden bg-white pt-1 pr-[3px] pl-1 font-['Noto_Sans','Noto_Sans_CJK_SC',sans-serif] text-[11px] text-[#44474c]">
      <SharedDefs />
      <TitleBar />
      <MenuTabs />
      <Ribbon />
      <main className="flex min-h-0 flex-1">
        <aside className="flex w-[364px] shrink-0 flex-col bg-[#edeef0]">
          <StructureTree />
          <PropertyPanel />
        </aside>
        <div className="flex min-w-0 flex-1 flex-col pt-px">
          <ViewToolbar />
          <Viewport />
        </div>
      </main>
    </div>
  );
}
